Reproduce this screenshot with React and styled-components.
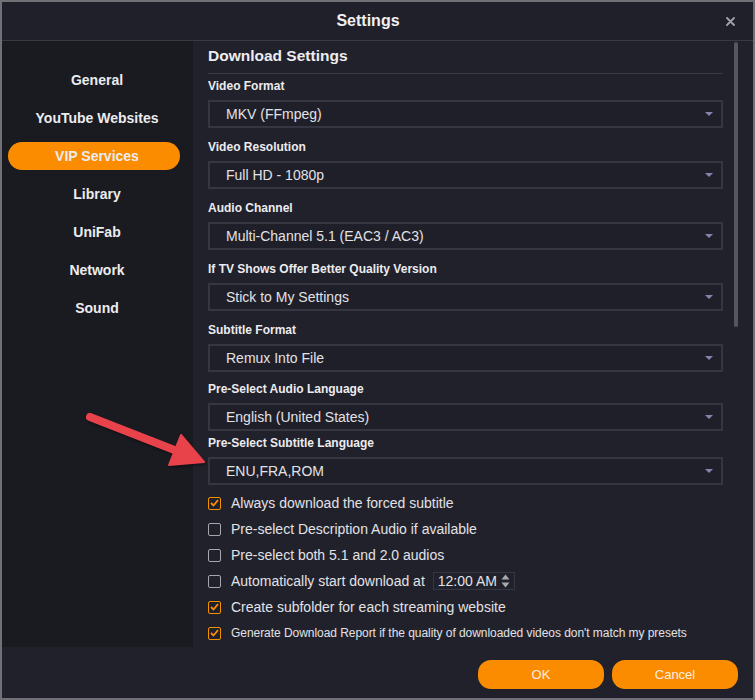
import React from 'react';
import styled, { createGlobalStyle } from 'styled-components';

const GlobalStyle = createGlobalStyle`
  * { box-sizing: border-box; }
  body {
    margin: 0;
    background: #6f6f74;
    font-family: "Liberation Sans", Arial, sans-serif;
  }
`;

const ORANGE = '#fb8c00';

const navItems = [
  'General',
  'YouTube Websites',
  'VIP Services',
  'Library',
  'UniFab',
  'Network',
  'Sound',
];

const fields = [
  { label: 'Video Format', value: 'MKV (FFmpeg)' },
  { label: 'Video Resolution', value: 'Full HD - 1080p' },
  { label: 'Audio Channel', value: 'Multi-Channel 5.1 (EAC3 / AC3)' },
  { label: 'If TV Shows Offer Better Quality Version', value: 'Stick to My Settings' },
  { label: 'Subtitle Format', value: 'Remux Into File' },
  { label: 'Pre-Select Audio Language', value: 'English (United States)', gap: 10 },
  { label: 'Pre-Select Subtitle Language', value: 'ENU,FRA,ROM', gap: 5 },
];

const checks = [
  { text: 'Always download the forced subtitle', on: true },
  { text: 'Pre-select Description Audio if available', on: false },
  { text: 'Pre-select both 5.1 and 2.0 audios', on: false },
  { text: 'Automatically start download at', on: false, time: '12:00 AM' },
  { text: 'Create subfolder for each streaming website', on: true },
  {
    text: "Generate Download Report if the quality of downloaded videos don't match my presets",
    on: true,
    small: true,
  },
];

const App = () => {
  return (
    <>
      <GlobalStyle />
      <Window>
        <TitleBar>
          <Title>Settings</Title>
          <CloseButton>
            <svg width="9" height="9" viewBox="0 0 9 9">
              <path d="M1 1 L8 8 M8 1 L1 8" stroke="#a2a2aa" strokeWidth="1.8" strokeLinecap="round" />
            </svg>
          </CloseButton>
        </TitleBar>

        <Body>
          <Sidebar>
            {navItems.map((item) => (
              <NavItem key={item}>
                <NavPill $active={item === 'VIP Services'}>{item}</NavPill>
              </NavItem>
            ))}
          </Sidebar>

          <Content>
            <Main>
              <Heading>Download Settings</Heading>
              {fields.map((f) => (
                <Field key={f.label} $gap={f.gap}>
                  <Label>{f.label}</Label>
                  <Select>
                    <span>{f.value}</span>
                    <Caret />
                  </Select>
                </Field>
              ))}

              <Checks>
                {checks.map((c) => (
                  <CheckRow key={c.text}>
                    <Box $on={c.on}>
                      {c.on && (
                        <svg width="9" height="8" viewBox="0 0 9 8">
                          <path d="M1 4 L3.5 6.5 L8 1.2" fill="none" stroke={ORANGE} strokeWidth="1.8" />
                        </svg>
                      )}
                    </Box>
                    <CheckText $small={c.small}>{c.text}</CheckText>
                    {c.time && (
                      <TimeInput>
                        <span>{c.time}</span>
                        <Spinner>
                          <svg width="9" height="14" viewBox="0 0 9 14">
                            <path d="M4.5 0.5 L8.5 5.5 L0.5 5.5 Z" fill="#a8a8b0" />
                            <path d="M4.5 13.5 L8.5 8.5 L0.5 8.5 Z" fill="#a8a8b0" />
                          </svg>
                        </Spinner>
                      </TimeInput>
                    )}
                  </CheckRow>
                ))}
              </Checks>
            </Main>
            <ScrollTrack>
              <Thumb />
            </ScrollTrack>
          </Content>
        </Body>

        <Footer>
          <ActionButton>OK</ActionButton>
          <ActionButton>Cancel</ActionButton>
        </Footer>

        <Pointer width="130" height="65" viewBox="0 0 130 65">
          <line x1="10" y1="12" x2="97" y2="46" stroke="#e8424b" strokeWidth="8" strokeLinecap="round" />
          <polygon points="124,57 89,60 101,30" fill="#e8424b" stroke="#e8424b" strokeWidth="2" strokeLinejoin="round" />
        </Pointer>
      </Window>
    </>
  );
};

const Window = styled.div`
  position: relative;
  width: 755px;
  height: 700px;
  border: 2px solid #707076;
  background: #21212b;
  display: flex;
  flex-direction: column;
  overflow: hidden;
`;

const TitleBar = styled.header`
  height: 39px;
  flex-shrink: 0;
  display: flex;
  align-items: center;
  background: #20202a;
  border-bottom: 1px solid #3a3a45;
`;

const Title = styled.h1`
  flex: 1;
  margin: 0;
  padding-left: 24px;
  text-align: center;
  font-size: 16px;
  font-weight: 700;
  color: #f0f0f2;
`;

const CloseButton = styled.div`
  width: 40px;
  margin-right: 3px;
  display: grid;
  place-content: center;
`;

const Body = styled.div`
  height: 606px;
  flex-shrink: 0;
  display: flex;
`;

const Sidebar = styled.nav`
  width: 191px;
  flex-shrink: 0;
  padding-top: 20px;
  background: #1a1a21;
`;

const NavItem = styled.div`
  height: 38px;
  display: flex;
  align-items: center;
`;

const NavPill = styled.div`
  width: 172px;
  height: 28px;
  margin-left: 6px;
  padding-left: 6px;
  border-radius: 14px;
  display: flex;
  align-items: center;
  justify-content: center;
  font-size: 14px;
  font-weight: 700;
  color: #ececef;
  background: ${(p) => (p.$active ? ORANGE : 'transparent')};
`;

const Content = styled.section`
  flex: 1;
  display: flex;
  overflow: hidden;
`;

const Main = styled.div`
  flex: 1;
  padding: 0 5px 0 15px;
  display: flex;
  flex-direction: column;
`;

const Heading = styled.h2`
  margin: 0;
  padding: 5px 0 7px;
  line-height: 20px;
  font-size: 15.5px;
  font-weight: 700;
  color: #ededf0;
  border-bottom: 1px solid #383843;
`;

const Field = styled.div`
  margin-top: ${(p) => (p.$gap !== undefined ? p.$gap : 12)}px;
  &:first-of-type {
    margin-top: 5px;
  }
`;

const Label = styled.div`
  line-height: 14px;
  margin-bottom: 7px;
  font-size: 12px;
  font-weight: 700;
  color: #ececef;
`;

const Select = styled.div`
  height: 28px;
  display: flex;
  align-items: center;
  justify-content: space-between;
  padding: 0 8px 0 16px;
  border: 2px solid #363643;
  background: #1f1f29;
  font-size: 14px;
  color: #e2e2e6;
`;

const Caret = styled.span`
  width: 0;
  height: 0;
  border-left: 4px solid transparent;
  border-right: 4px solid transparent;
  border-top: 4px solid #8a82aa;
`;

const Checks = styled.div`
  margin-top: 5px;
  display: flex;
  flex-direction: column;
`;

const CheckRow = styled.div`
  height: 26px;
  display: flex;
  align-items: center;
`;

const Box = styled.span`
  width: 13px;
  height: 13px;
  flex-shrink: 0;
  border: 1.5px solid ${(p) => (p.$on ? '#f39200' : '#a6a6ac')};
  border-radius: 2px;
  display: grid;
  place-content: center;
  margin-right: 10px;
`;

const CheckText = styled.span`
  font-size: ${(p) => (p.$small ? 12 : 14)}px;
  letter-spacing: ${(p) => (p.$small ? '-0.05px' : '0')};
  color: #e2e2e6;
  white-space: nowrap;
`;

const TimeInput = styled.div`
  margin-left: 8px;
  width: 82px;
  height: 18px;
  display: flex;
  align-items: center;
  justify-content: space-between;
  padding: 0 4px 0 4px;
  border: 1.5px solid #363643;
  font-size: 14px;
  color: #e2e2e6;
`;

const Spinner = styled.span`
  display: grid;
  place-content: center;
`;

const ScrollTrack = styled.div`
  width: 25px;
  flex-shrink: 0;
  padding: 1px 0 0 6px;
`;

const Thumb = styled.div`
  width: 4px;
  height: 285px;
  border-radius: 2px;
  background: #56565e;
`;

const Footer = styled.footer`
  flex: 1;
  display: flex;
  justify-content: flex-end;
  align-items: flex-start;
  gap: 8px;
  padding: 13px 15px 0 0;
`;

const ActionButton = styled.button`
  all: unset;
  width: 126px;
  height: 29px;
  border-radius: 13px;
  background: ${ORANGE};
  display: grid;
  place-content: center;
  font-family: "Liberation Sans", Arial, sans-serif;
  font-size: 13px;
  color: #fbeee0;
`;

const Pointer = styled.svg`
  position: absolute;
  left: 78px;
  top: 403px;
  pointer-events: none;
  filter: drop-shadow(1px 2px 1px rgba(0, 0, 0, 0.35));
`;

export default App;
